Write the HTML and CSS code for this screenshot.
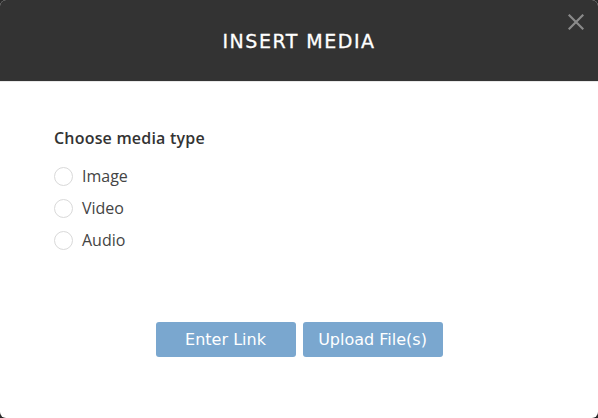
FILE: index.html
```html
<!DOCTYPE html>
<html lang="en">
<head>
  <meta charset="UTF-8">
  <meta name="viewport" content="width=device-width, initial-scale=1">
  <title>Insert Media</title>
  <link rel="stylesheet" href="styles.css">
</head>
<body>
  <div class="modal">
    <header class="modal-header">
      <h1>INSERT MEDIA</h1>
      <button type="button" class="close" aria-label="Close">
        <svg width="16" height="16" viewBox="0 0 16 16">
          <path d="M1.5 1.5 L14.5 14.5 M14.5 1.5 L1.5 14.5" stroke="#8a8a8a" stroke-width="2.2" stroke-linecap="square"/>
        </svg>
      </button>
    </header>
    <div class="modal-body">
      <p class="question">Choose media type</p>
      <label class="option"><span class="radio"></span>Image</label>
      <label class="option"><span class="radio"></span>Video</label>
      <label class="option"><span class="radio"></span>Audio</label>
    </div>
    <div class="modal-footer">
      <button type="button" class="btn">Enter Link</button>
      <button type="button" class="btn">Upload File(s)</button>
    </div>
  </div>
</body>
</html>
```

FILE: styles.css
```css
body {
  margin: 0;
  background: #2a2a2a;
  font-family: 'Open Sans', 'Noto Sans', sans-serif;
}
.modal {
  height: 418px;
  background: #ffffff;
  border-radius: 6px;
  overflow: hidden;
  display: flex;
  flex-direction: column;
}
.modal-header {
  position: relative;
  height: 81px;
  background: #333333;
  border-bottom: 1px solid #e8e8e8;
  display: flex;
  align-items: center;
  justify-content: center;
}
.modal-header h1 {
  margin: 0;
  color: #ffffff;
  font-family: 'DejaVu Sans', sans-serif;
  font-weight: normal;
  font-size: 19px;
  letter-spacing: 1.5px;
  -webkit-text-stroke: 0.3px #ffffff;
}
.close {
  position: absolute;
  top: 14px;
  right: 14px;
  padding: 0;
  border: none;
  background: none;
  display: flex;
  cursor: pointer;
}
.modal-body {
  padding: 46px 54px 0;
  flex: 1;
}
.question {
  margin: 0 0 12px;
  font-size: 16px;
  line-height: 20px;
  font-weight: 600;
  color: #333333;
  letter-spacing: 0.2px;
}
.option {
  display: flex;
  align-items: center;
  gap: 9px;
  height: 32px;
  font-size: 16px;
  color: #444444;
}
.radio {
  width: 17px;
  height: 17px;
  border: 1px solid #d9d9d9;
  border-radius: 50%;
}
.modal-footer {
  display: flex;
  justify-content: center;
  gap: 7px;
  padding-bottom: 61px;
}
.btn {
  width: 140px;
  height: 35px;
  border: none;
  border-radius: 3px;
  background: #7aa7cf;
  color: #ffffff;
  font-family: 'DejaVu Sans', sans-serif;
  font-size: 16px;
  cursor: pointer;
}
```
